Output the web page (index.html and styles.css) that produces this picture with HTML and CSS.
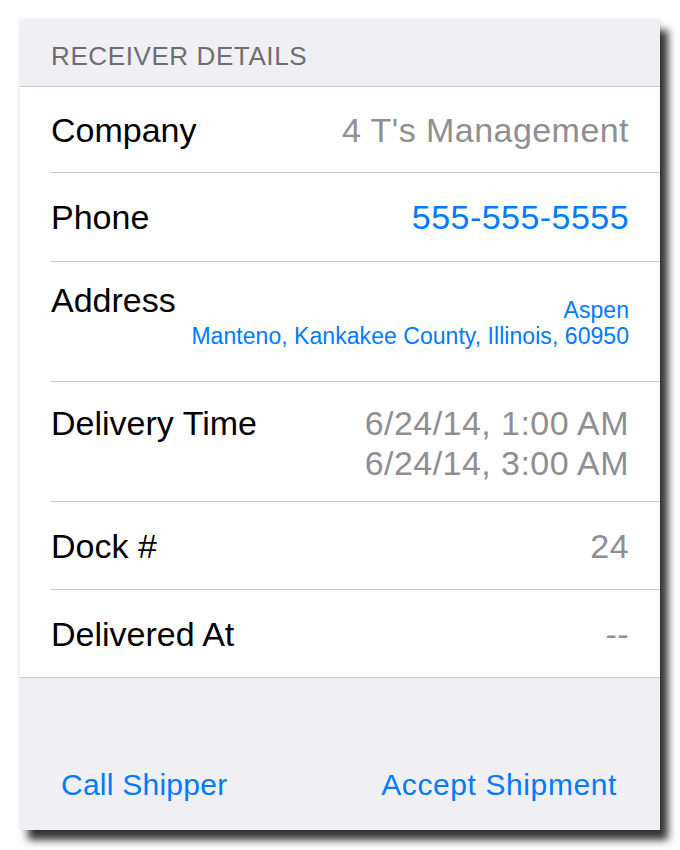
FILE: index.html
```html
<!DOCTYPE html>
<html>
<head>
<meta charset="utf-8">
<link rel="stylesheet" href="styles.css">
</head>
<body>
<div class="card">
  <div class="section-header">RECEIVER DETAILS</div>
  <div class="row row-first">
    <div class="label">Company</div>
    <div class="value">4 T's Management</div>
  </div>
  <div class="row row-second">
    <div class="label">Phone</div>
    <div class="value link">555-555-5555</div>
  </div>
  <div class="row row-tall row-address">
    <div class="label">Address</div>
    <div class="value link small">
      <div>Aspen</div>
      <div>Manteno, Kankakee County, Illinois, 60950</div>
    </div>
  </div>
  <div class="row row-tall row-delivery">
    <div class="label">Delivery Time</div>
    <div class="value">
      <div>6/24/14, 1:00 AM</div>
      <div>6/24/14, 3:00 AM</div>
    </div>
  </div>
  <div class="row">
    <div class="label">Dock #</div>
    <div class="value">24</div>
  </div>
  <div class="row row-last">
    <div class="label">Delivered At</div>
    <div class="value">--</div>
  </div>
  <div class="footer">
    <span class="action action-left">Call Shipper</span>
    <span class="action action-right">Accept Shipment</span>
  </div>
</div>
</body>
</html>
```
FILE: styles.css
```css
html, body {
  margin: 0;
  padding: 0;
  background: #ffffff;
}
body {
  padding: 20px;
  font-family: "Liberation Sans", Arial, sans-serif;
}
.card {
  width: 640px;
  height: 810px;
  background: #ffffff;
  display: flex;
  flex-direction: column;
  box-shadow: 8px 10px 8px rgba(0, 0, 0, 0.8), 0 0 4px rgba(0, 0, 0, 0.12);
}
.section-header {
  height: 67px;
  box-sizing: border-box;
  padding: 21px 31px 0 31px;
  background: #efeff4;
  color: #6d6d72;
  font-size: 26px;
  line-height: 30px;
  letter-spacing: 0.6px;
  border-bottom: 1px solid #c8c7cc;
  flex-shrink: 0;
}
.row {
  margin-left: 31px;
  padding-right: 31px;
  height: 88px;
  box-sizing: border-box;
  border-bottom: 1px solid #c8c7cc;
  display: flex;
  justify-content: space-between;
  align-items: center;
  font-size: 34px;
  line-height: 40px;
  flex-shrink: 0;
}
.row-first {
  height: 86px;
}
.row-second {
  height: 89px;
}
.row-last {
  height: 87px;
  border-bottom: none;
}
.row-tall {
  height: 120px;
  align-items: flex-start;
}
.row-address {
  padding-top: 18px;
}
.row-address .value {
  margin-top: 17px;
}
.row-delivery {
  padding-top: 21px;
}
.label {
  color: #000000;
}
.value {
  color: #8e8e93;
  text-align: right;
  letter-spacing: 0.45px;
}
.link {
  color: #007aff;
}
.small {
  font-size: 23px;
  line-height: 26px;
  letter-spacing: 0.05px;
}
.footer {
  flex: 1;
  background: #efeff4;
  border-top: 1px solid #c8c7cc;
  display: flex;
  justify-content: space-between;
  align-items: flex-end;
  padding: 0 43px 27px 41px;
}
.action {
  color: #007aff;
  font-size: 30px;
  line-height: 36px;
}
.action-left {
  letter-spacing: 0.25px;
}
.action-right {
  letter-spacing: 0.6px;
}
```
